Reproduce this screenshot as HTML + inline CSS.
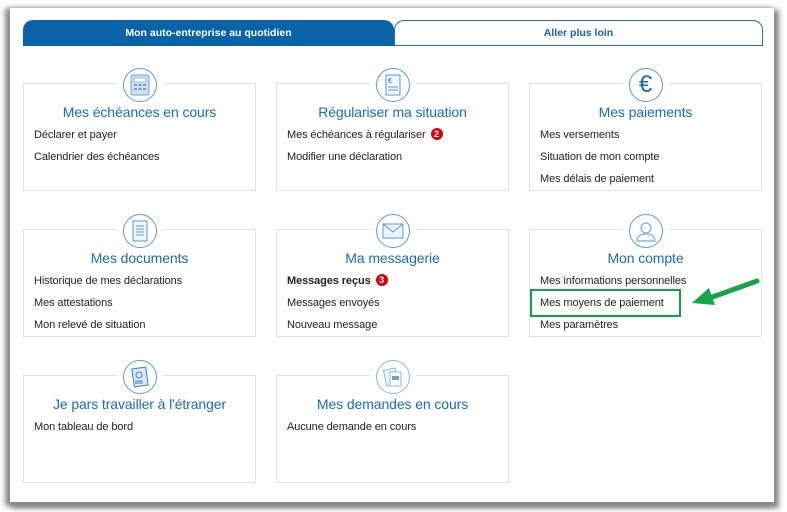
<!DOCTYPE html>
<html><head><meta charset="utf-8"><style>
*{margin:0;padding:0;box-sizing:border-box}
body{width:787px;height:512px;background:#fff;position:relative;overflow:hidden;font-family:"Liberation Sans",Arial,sans-serif}
.frame{position:absolute;left:10px;top:8px;width:764px;height:494px;background:#fff;box-shadow:-3px 2px 5px 2px #8a8a8a, 3px 4px 5px 2px #8a8a8a}
.tab{position:absolute;top:20px;height:26px;font-size:10.5px;font-weight:bold;text-align:center;line-height:26px;border-radius:10px 10px 0 0}
.t1{left:23px;width:371px;background:#0863a8;color:#fff}
.t2{left:394px;width:369px;border:1px solid #1e72b5;color:#1763a5;line-height:24px}
.card{position:absolute;width:233px;height:108px;border:1px solid #e2e2e2;background:#fff}
.card h2{font-weight:normal;font-size:14px;color:#1c6cb0;text-align:center;margin-top:20px;letter-spacing:-0.1px}
.card ul{list-style:none;margin:7px 0 0 10px}
.card li{font-size:11px;color:#222;height:22px;line-height:16px;letter-spacing:-0.1px}
.ic{position:absolute;left:50%;top:-16px;margin-left:-23px;width:46px;height:34px;background:#fff}
.ic div{position:absolute;left:6px;top:0;width:34px;height:34px;border:1.3px solid #5a9ad0;border-radius:50%;background:#fff;display:flex;align-items:center;justify-content:center}
.b{display:inline-block;width:12px;height:12px;border-radius:50%;background:#d9000d;color:#fff;font-size:9px;font-weight:bold;text-align:center;line-height:12px;vertical-align:1px;margin-left:2px}
</style></head><body>
<div class="frame"></div>
<div class="tab t1">Mon auto-entreprise au quotidien</div>
<div class="tab t2">Aller plus loin</div>

<div class="card" style="left:23px;top:83px"><div class="ic"><div><svg width="20" height="22"><rect x="1" y="1" width="18" height="20" rx="2" fill="#cfe0f0" stroke="#6b9fd0"/><rect x="4" y="4" width="12" height="4" fill="#fff" stroke="#6b9fd0" stroke-width=".6"/><g fill="#6b9fd0"><rect x="4" y="10" width="3" height="2"/><rect x="8.5" y="10" width="3" height="2"/><rect x="13" y="10" width="3" height="2"/><rect x="4" y="14" width="3" height="2"/><rect x="8.5" y="14" width="3" height="2"/><rect x="13" y="14" width="3" height="2"/></g></svg></div></div>
<h2>Mes échéances en cours</h2><ul><li>Déclarer et payer</li><li>Calendrier des échéances</li></ul></div>

<div class="card" style="left:276px;top:83px"><div class="ic"><div><svg width="16" height="22"><rect x="1" y="1" width="14" height="20" fill="#eef4fa" stroke="#5a9ad0"/><text x="3" y="9" font-size="7" fill="#1c6cb0" font-family="Liberation Sans">€</text><path d="M3 13h10M3 16h10" stroke="#5a9ad0"/></svg></div></div>
<h2>Régulariser ma situation</h2><ul><li>Mes échéances à régulariser <span class="b">2</span></li><li>Modifier une déclaration</li></ul></div>

<div class="card" style="left:529px;top:83px"><div class="ic"><div><span style="font-size:24px;color:#1c6cb0;line-height:1">€</span></div></div>
<h2>Mes paiements</h2><ul><li>Mes versements</li><li>Situation de mon compte</li><li>Mes délais de paiement</li></ul></div>

<div class="card" style="left:23px;top:229px"><div class="ic"><div><svg width="16" height="22"><rect x="1" y="1" width="14" height="20" fill="#eef4fa" stroke="#5a9ad0"/><path d="M4 6h8M4 9h8M4 12h8M4 15h8" stroke="#5a9ad0"/></svg></div></div>
<h2>Mes documents</h2><ul><li>Historique de mes déclarations</li><li>Mes attestations</li><li>Mon relevé de situation</li></ul></div>

<div class="card" style="left:276px;top:229px"><div class="ic"><div><svg width="22" height="16"><rect x="1" y="1" width="20" height="14" fill="#eef4fa" stroke="#5a9ad0"/><path d="M1 1l10 8 10-8" fill="none" stroke="#5a9ad0"/></svg></div></div>
<h2>Ma messagerie</h2><ul><li><b>Messages reçus</b> <span class="b">3</span></li><li>Messages envoyés</li><li>Nouveau message</li></ul></div>

<div class="card" style="left:529px;top:229px"><div class="ic"><div><svg width="22" height="22"><circle cx="11" cy="8" r="5" fill="none" stroke="#8bb8de" stroke-width="1.4"/><path d="M2 21c0-5 4-7 9-7s9 2 9 7z" fill="none" stroke="#8bb8de" stroke-width="1.4"/></svg></div></div>
<h2>Mon compte</h2><ul><li>Mes informations personnelles</li><li>Mes moyens de paiement</li><li>Mes paramètres</li></ul></div>

<div class="card" style="left:23px;top:375px"><div class="ic"><div><svg width="20" height="22"><rect x="3" y="2" width="14" height="18" fill="#dbe8f4" stroke="#3a86c4" transform="rotate(-8 10 11)"/><circle cx="9" cy="9" r="3" fill="none" stroke="#3a86c4"/><path d="M5 15h8M5 17h8" stroke="#3a86c4"/></svg></div></div>
<h2>Je pars travailler à l'étranger</h2><ul><li>Mon tableau de bord</li></ul></div>

<div class="card" style="left:276px;top:375px"><div class="ic"><div style="border-color:#8bb8de"><svg width="20" height="22"><rect x="2" y="3" width="12" height="16" fill="#eef4fa" stroke="#8bb8de" transform="rotate(-12 8 11)"/><rect x="7" y="6" width="11" height="14" fill="#fff" stroke="#8bb8de"/><rect x="9" y="10" width="7" height="4" fill="#6b9fd0"/></svg></div></div>
<h2>Mes demandes en cours</h2><ul><li>Aucune demande en cours</li></ul></div>

<div style="position:absolute;left:530px;top:289px;width:151px;height:28px;border:2px solid #12a14a"></div>
<svg style="position:absolute;left:685px;top:272px" width="80" height="40"><path d="M72 9L22 27" stroke="#12a64a" stroke-width="5" stroke-linecap="round"/><path d="M7 31L24 16L30 33Z" fill="#12a64a"/></svg>
</body></html>
